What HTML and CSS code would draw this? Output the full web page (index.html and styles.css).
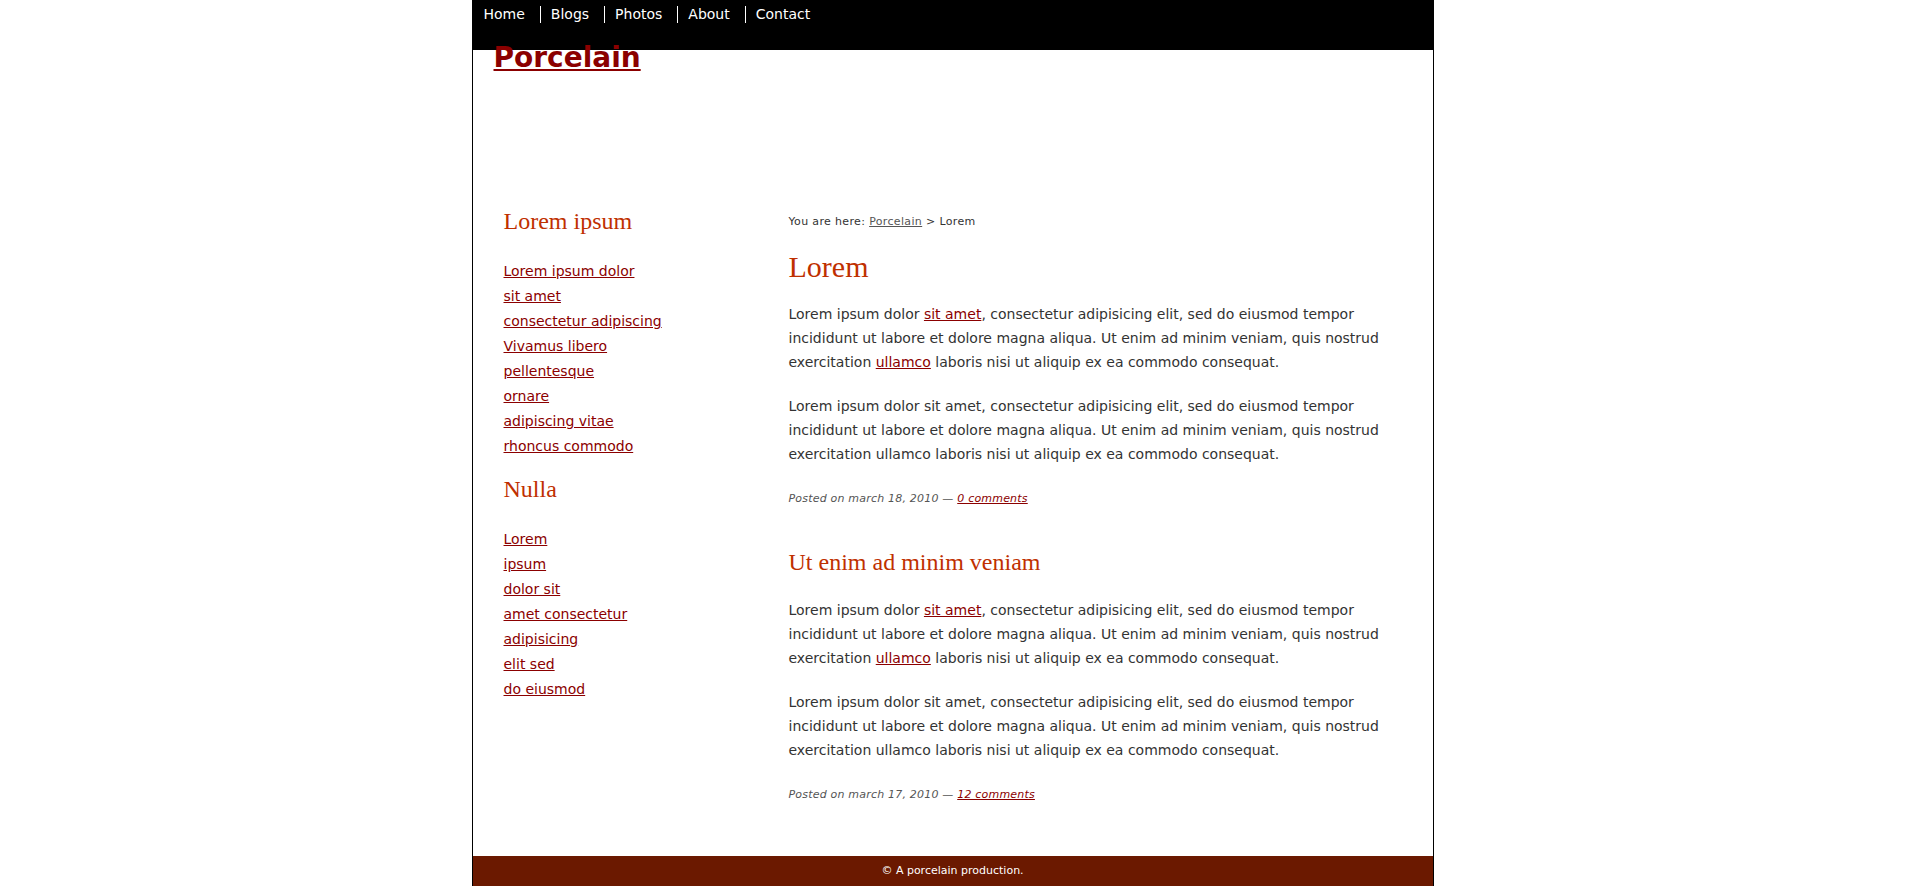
FILE: index.html
```html
<!DOCTYPE html>
<html>
<head>
<meta charset="utf-8">
<title>Porcelain</title>
<link rel="stylesheet" href="styles.css">
</head>
<body>
<div class="page">
  <ul class="nav">
    <li class="nav-item"><a href="#">Home</a></li>
    <li class="nav-item sep"><a href="#">Blogs</a></li>
    <li class="nav-item sep"><a href="#">Photos</a></li>
    <li class="nav-item sep"><a href="#">About</a></li>
    <li class="nav-item sep"><a href="#">Contact</a></li>
  </ul>
  <div class="masthead">
    <h1 class="site-title"><a href="#">Porcelain</a></h1>
  </div>
  <div class="columns">
    <div class="sidebar">
      <h3 class="side-title">Lorem ipsum</h3>
      <ul class="side-list">
        <li><a href="#">Lorem ipsum dolor</a></li>
        <li><a href="#">sit amet</a></li>
        <li><a href="#">consectetur adipiscing</a></li>
        <li><a href="#">Vivamus libero</a></li>
        <li><a href="#">pellentesque</a></li>
        <li><a href="#">ornare</a></li>
        <li><a href="#">adipiscing vitae</a></li>
        <li><a href="#">rhoncus commodo</a></li>
      </ul>
      <h3 class="side-title next">Nulla</h3>
      <ul class="side-list">
        <li><a href="#">Lorem</a></li>
        <li><a href="#">ipsum</a></li>
        <li><a href="#">dolor sit</a></li>
        <li><a href="#">amet consectetur</a></li>
        <li><a href="#">adipisicing</a></li>
        <li><a href="#">elit sed</a></li>
        <li><a href="#">do eiusmod</a></li>
      </ul>
    </div>
    <div class="main">
      <p class="crumbs">You are here: <a href="#">Porcelain</a> &gt; Lorem</p>
      <div class="post">
        <h2 class="post-title big">Lorem</h2>
        <p class="text">Lorem ipsum dolor <a href="#">sit amet</a>, consectetur adipisicing elit, sed do eiusmod tempor incididunt ut labore et dolore magna aliqua. Ut enim ad minim veniam, quis nostrud exercitation <a href="#">ullamco</a> laboris nisi ut aliquip ex ea commodo consequat.</p>
        <p class="text">Lorem ipsum dolor sit amet, consectetur adipisicing elit, sed do eiusmod tempor incididunt ut labore et dolore magna aliqua. Ut enim ad minim veniam, quis nostrud exercitation ullamco laboris nisi ut aliquip ex ea commodo consequat.</p>
        <p class="meta">Posted on march 18, 2010 &mdash; <a href="#">0 comments</a></p>
      </div>
      <div class="post second">
        <h2 class="post-title small">Ut enim ad minim veniam</h2>
        <p class="text">Lorem ipsum dolor <a href="#">sit amet</a>, consectetur adipisicing elit, sed do eiusmod tempor incididunt ut labore et dolore magna aliqua. Ut enim ad minim veniam, quis nostrud exercitation <a href="#">ullamco</a> laboris nisi ut aliquip ex ea commodo consequat.</p>
        <p class="text">Lorem ipsum dolor sit amet, consectetur adipisicing elit, sed do eiusmod tempor incididunt ut labore et dolore magna aliqua. Ut enim ad minim veniam, quis nostrud exercitation ullamco laboris nisi ut aliquip ex ea commodo consequat.</p>
        <p class="meta">Posted on march 17, 2010 &mdash; <a href="#">12 comments</a></p>
      </div>
    </div>
  </div>
  <div class="footer">&copy; A porcelain production.</div>
</div>
</body>
</html>
```

FILE: styles.css
```css
html, body {
  margin: 0;
  padding: 0;
  background: #fff;
}

body {
  font-family: "DejaVu Sans", Verdana, sans-serif;
  color: #333;
}

.page {
  width: 960px;
  margin: 0 auto;
  border-left: 1px solid #000;
  border-right: 1px solid #000;
  background: #fff;
}

/* navigation */
.nav {
  list-style: none;
  margin: 0;
  padding: 6px 0 0 1px;
  height: 44px;
  background: #000;
  display: flex;
  align-items: flex-start;
  column-gap: 5px;
}

.nav-item {
  padding: 0 10px;
  font-size: 14px;
  line-height: 17px;
}

.nav-item.sep {
  border-left: 1px solid #fff;
}

.nav-item a {
  color: #fff;
  text-decoration: none;
}

/* masthead */
.masthead {
  display: flow-root;
  height: 157px;
  padding-left: 21px;
}

.site-title {
  margin: -9px 0 0 0;
  font-size: 28px;
  line-height: 33px;
  font-weight: bold;
  position: relative;
}

.site-title a {
  color: #8b0000;
  text-decoration: underline;
}

/* columns */
.columns {
  display: flex;
  padding: 0 0 53px 31px;
}

.sidebar {
  width: 285px;
  flex: none;
}

.side-title {
  font-family: "Liberation Serif", "Times New Roman", serif;
  font-weight: normal;
  font-size: 24px;
  line-height: 28px;
  color: #bf3000;
  margin: 0 0 24px 0;
}

.side-title.next {
  margin-top: 16px;
}

.side-list {
  list-style: none;
  margin: 0;
  padding: 0;
}

.side-list li {
  font-size: 14px;
  line-height: 25px;
}

.side-list a {
  color: #8b0000;
  text-decoration: underline;
}

.main {
  width: 600px;
  flex: none;
}

.crumbs {
  margin: 7px 0 19px 0;
  font-size: 11px;
  line-height: 16px;
  letter-spacing: 0.35px;
  color: #333;
}

.crumbs a {
  color: #555;
}

.post-title {
  font-family: "Liberation Serif", "Times New Roman", serif;
  font-weight: normal;
  color: #bf3000;
}

.post-title.big {
  font-size: 30px;
  line-height: 36px;
  margin: 0 0 17px 0;
}

.post-title.small {
  font-size: 24px;
  line-height: 28px;
  margin: 0 0 22px 0;
}

.post.second {
  margin-top: 41px;
}

.text {
  font-size: 14px;
  line-height: 24px;
  margin: 0 0 20px 0;
}

.text a {
  color: #8b0000;
}

.meta {
  margin: 25px 0 0 0;
  font-size: 11px;
  line-height: 16px;
  letter-spacing: 0.2px;
  font-style: italic;
  color: #555;
}

.post.second .meta {
  margin-top: 25px;
}

.meta a {
  color: #8b0000;
}

.footer {
  height: 30px;
  line-height: 30px;
  background: #6b1900;
  color: #fff;
  font-size: 11px;
  text-align: center;
}
```
